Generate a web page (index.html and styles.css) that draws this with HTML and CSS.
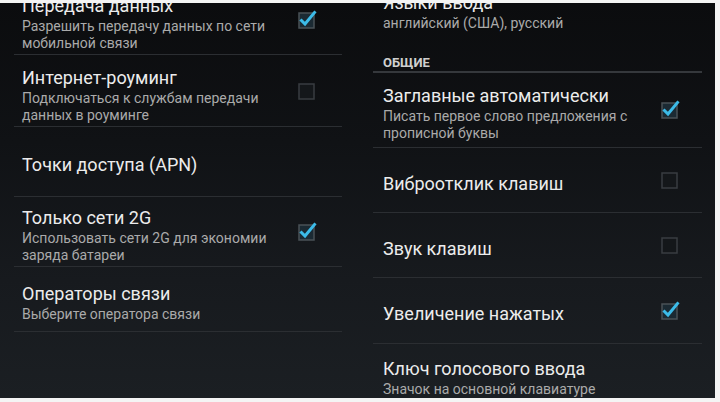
FILE: index.html
```html
<!DOCTYPE html>
<html lang="ru">
<head>
<meta charset="utf-8">
<title>Настройки</title>
<link rel="stylesheet" href="styles.css">
</head>
<body>
<div class="page">
  <div class="panel">
    <section class="list list-left">
      <div class="item h-first">
        <div class="text">
          <div class="title">Передача данных</div>
          <div class="sum">Разрешить передачу данных по сети<br>мобильной связи</div>
        </div>
        <span class="cb on"><svg viewBox="0 0 20 20" width="20" height="20"><rect x="2" y="3" width="15" height="15" class="box"/><path d="M4.5 10.5 L8 14 L17.5 2.5" class="tick"/></svg></span>
      </div>
      <div class="item h72 low">
        <div class="text">
          <div class="title">Интернет-роуминг</div>
          <div class="sum">Подключаться к службам передачи<br>данных в роуминге</div>
        </div>
        <span class="cb"><svg viewBox="0 0 20 20" width="20" height="20"><rect x="2" y="3" width="15" height="15" class="box"/></svg></span>
      </div>
      <div class="item h70">
        <div class="text">
          <div class="title">Точки доступа (APN)</div>
        </div>
      </div>
      <div class="item h70">
        <div class="text">
          <div class="title">Только сети 2G</div>
          <div class="sum">Использовать сети 2G для экономии<br>заряда батареи</div>
        </div>
        <span class="cb on"><svg viewBox="0 0 20 20" width="20" height="20"><rect x="2" y="3" width="15" height="15" class="box"/><path d="M4.5 10.5 L8 14 L17.5 2.5" class="tick"/></svg></span>
      </div>
      <div class="item h65">
        <div class="text">
          <div class="title">Операторы связи</div>
          <div class="sum">Выберите оператора связи</div>
        </div>
      </div>
    </section>

    <section class="list list-right">
      <div class="item-plain">
        <div class="title">Языки ввода</div>
        <div class="sum">английский (США), русский</div>
      </div>
      <div class="category">ОБЩИЕ</div>
      <div class="item h75">
        <div class="text">
          <div class="title">Заглавные автоматически</div>
          <div class="sum">Писать первое слово предложения с<br>прописной буквы</div>
        </div>
        <span class="cb on"><svg viewBox="0 0 20 20" width="20" height="20"><rect x="2" y="3" width="15" height="15" class="box"/><path d="M4.5 10.5 L8 14 L17.5 2.5" class="tick"/></svg></span>
      </div>
      <div class="item h65">
        <div class="text">
          <div class="title">Виброотклик клавиш</div>
        </div>
        <span class="cb"><svg viewBox="0 0 20 20" width="20" height="20"><rect x="2" y="3" width="15" height="15" class="box"/></svg></span>
      </div>
      <div class="item h65">
        <div class="text">
          <div class="title">Звук клавиш</div>
        </div>
        <span class="cb"><svg viewBox="0 0 20 20" width="20" height="20"><rect x="2" y="3" width="15" height="15" class="box"/></svg></span>
      </div>
      <div class="item h66">
        <div class="text">
          <div class="title">Увеличение нажатых</div>
        </div>
        <span class="cb on"><svg viewBox="0 0 20 20" width="20" height="20"><rect x="2" y="3" width="15" height="15" class="box"/><path d="M4.5 10.5 L8 14 L17.5 2.5" class="tick"/></svg></span>
      </div>
      <div class="item h60 last">
        <div class="text">
          <div class="title">Ключ голосового ввода</div>
          <div class="sum">Значок на основной клавиатуре</div>
        </div>
      </div>
    </section>
  </div>
</div>
</body>
</html>
```

FILE: styles.css
```css
* { box-sizing: border-box; }

html, body {
  margin: 0;
  padding: 0;
  background: #ffffff;
}

.page {
  width: 720px;
  height: 402px;
  padding: 3px 5px 4px 0;
  background: #f4f4f4;
}

.panel {
  height: 395px;
  overflow: hidden;
  display: flex;
  gap: 31px;
  padding-left: 14px;
  background: linear-gradient(to bottom, #0b0c0e 0%, #101215 35%, #171a1e 70%, #1b1f23 100%);
  font-family: Roboto, "Noto Sans", "DejaVu Sans", sans-serif;
}

.list {
  display: flex;
  flex-direction: column;
}

.list > * { flex: none; }

.list-left {
  width: 328px;
  margin-top: -18px;
}

.list-right {
  width: 329px;
  margin-top: -11px;
}

.item {
  display: flex;
  align-items: center;
  border-bottom: 1px solid #2b2e32;
}

.list-left .item { padding: 0 25px 0 8px; }
.list-right .item { padding: 0 22px 0 10px; }

.item.last { border-bottom: none; }

.h-first { height: 70px; }
.h75 { height: 75px; }
.h72 { height: 72px; }
.h70 { height: 70px; }
.h66 { height: 66px; }
.h65 { height: 65px; }
.h60 { height: 60px; }

.text {
  flex: 1;
  padding-top: 7px;
}

.item.low .text { padding-top: 10px; }

.title {
  font-size: 18px;
  line-height: 22px;
  color: #ececec;
  white-space: nowrap;
}

.sum {
  margin-top: 1px;
  font-size: 14px;
  line-height: 17px;
  color: #aaaaaa;
  white-space: nowrap;
}

.item-plain {
  padding-left: 10px;
}

.category {
  padding: 23px 0 1px 10px;
  font-size: 13px;
  line-height: 15px;
  font-weight: 700;
  color: #cfcfcf;
  border-bottom: 2px solid #35383c;
}

.cb {
  flex: none;
  width: 20px;
  height: 20px;
  display: block;
}

.cb svg { display: block; }

.box {
  fill: #14171a;
  stroke: #393d41;
  stroke-width: 1.5;
}

.cb.on .box {
  fill: #1b2a33;
  stroke: #4a5257;
}

.tick {
  fill: none;
  stroke: #3cbbe8;
  stroke-width: 3;
  stroke-linecap: square;
  stroke-linejoin: miter;
}
```
